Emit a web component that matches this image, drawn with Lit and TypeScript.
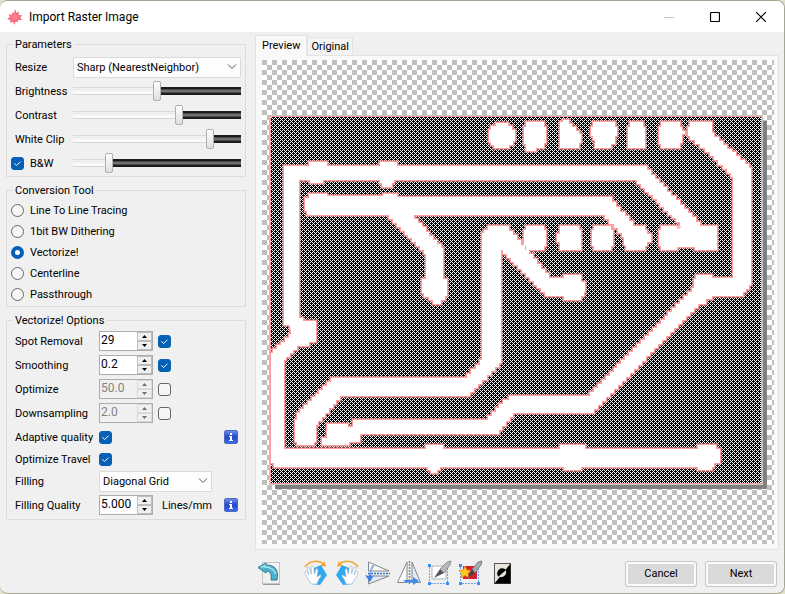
import { LitElement, html, svg, css } from "lit";
import { customElement, property, state } from "lit/decorators.js";

type Point = [number, number];

const STEP = 4;

/* Closed outline whose slanted edges are broken into pixel-like stairs. */
function stairs(points: Point[]): string {
  const out: string[] = [`M${points[0][0]} ${points[0][1]}`];
  points.forEach(([x0, y0], i) => {
    const [x1, y1] = points[(i + 1) % points.length];
    const dx = x1 - x0;
    const dy = y1 - y0;
    if (dx === 0 || dy === 0) {
      out.push(`L${x1} ${y1}`);
      return;
    }
    const n = Math.max(1, Math.round(Math.min(Math.abs(dx), Math.abs(dy)) / STEP));
    for (let k = 1; k <= n; k++) {
      out.push(`H${Math.round(x0 + (dx * (k - 0.5)) / n)}`);
      out.push(`V${Math.round(y0 + (dy * k) / n)}`);
    }
    out.push(`H${x1}`);
  });
  return out.join("") + "Z";
}

/* Pad with its four corners notched. */
function pad(l: number, t: number, r: number, b: number): Point[] {
  return [
    [l + 4, t], [r - 4, t], [r, t + 4], [r, b - 4],
    [r - 4, b], [l + 4, b], [l, b - 4], [l, t + 4],
  ];
}

const COPPER: Point[][] = [
  [
    [284, 166], [309, 166], [309, 162], [327, 162], [327, 166], [380, 166], [380, 162],
    [397, 162], [397, 166], [645, 166], [702, 226], [717, 226], [717, 250], [695, 250],
    [695, 247], [677, 247], [677, 250], [663, 250], [659, 246], [659, 230], [663, 226],
    [682, 226], [635, 180], [394, 180], [394, 183], [390, 187], [384, 187], [380, 183],
    [380, 180], [323, 180], [323, 183], [310, 183], [310, 180], [299, 180], [299, 318],
    [303, 318], [303, 321], [316, 321], [316, 342], [309, 342], [309, 346], [299, 346],
    [284, 360], [284, 449], [426, 449], [426, 445], [443, 445], [443, 449], [560, 449],
    [560, 445], [585, 445], [585, 449], [698, 449], [698, 445], [716, 445], [716, 449],
    [720, 449], [720, 463], [716, 463], [712, 467], [712, 470], [698, 470], [698, 467],
    [581, 467], [581, 470], [564, 470], [564, 467], [441, 467], [435, 473], [432, 473],
    [426, 467], [274, 467], [274, 463], [271, 463], [271, 353], [291, 334], [291, 329],
    [288, 325], [284, 325],
  ],
  [
    [305, 198], [312, 194], [327, 194], [327, 196], [383, 196], [383, 194], [397, 194],
    [397, 197], [610, 197], [635, 226], [645, 226], [645, 230], [653, 238], [645, 246],
    [645, 250], [628, 250], [624, 245], [624, 237], [603, 215], [412, 215], [443, 248],
    [443, 279], [447, 279], [447, 296], [439, 304], [435, 304], [422, 293], [422, 279],
    [426, 279], [426, 254], [387, 215], [309, 215], [305, 211],
  ],
  [
    [688, 127], [692, 122], [712, 122], [712, 133], [751, 168], [751, 285], [741, 296],
    [712, 296], [712, 299], [700, 304], [592, 413], [515, 413], [497, 434], [362, 434],
    [358, 442], [349, 442], [349, 445], [322, 445], [322, 438], [327, 438], [327, 424],
    [348, 424], [348, 427], [351, 427], [355, 420], [486, 420], [505, 400], [513, 396],
    [588, 396], [694, 288], [694, 279], [698, 275], [712, 275], [712, 278], [733, 278],
    [733, 177], [708, 152], [702, 148], [688, 136],
  ],
  [
    [482, 233], [490, 226], [507, 226], [551, 278], [564, 278], [564, 275], [581, 275],
    [581, 282], [585, 282], [585, 292], [579, 300], [564, 300], [564, 296], [547, 296],
    [501, 250], [501, 363], [468, 396], [342, 396], [316, 425], [316, 442], [312, 445],
    [298, 445], [295, 442], [295, 420], [298, 413], [333, 378], [465, 378], [482, 360],
  ],
  [
    [492, 126], [496, 126], [496, 123], [508, 123], [508, 126], [515, 130], [515, 141],
    [511, 145], [507, 148], [495, 148], [489, 142], [489, 130],
  ],
  [
    [528, 122], [542, 122], [546, 127], [546, 143], [542, 148], [536, 148], [536, 151],
    [528, 151], [524, 144], [524, 127],
  ],
  [
    [560, 122], [563, 122], [563, 120], [567, 120], [581, 134], [581, 143], [577, 148],
    [560, 148],
  ],
  [
    [595, 122], [613, 122], [617, 127], [617, 136], [613, 144], [609, 148], [595, 148],
    [595, 140], [591, 136], [591, 127],
  ],
  [[632, 122], [641, 122], [645, 127], [645, 148], [628, 148], [628, 127]],
  [
    [663, 122], [678, 122], [682, 127], [682, 131], [685, 131], [685, 134], [682, 134],
    [682, 143], [678, 148], [663, 148], [659, 144], [659, 127],
  ],
  pad(524, 226, 546, 250),
  [
    [560, 226], [577, 226], [581, 230], [581, 250], [560, 250], [560, 242], [557, 242],
    [557, 234], [560, 234],
  ],
  pad(592, 226, 613, 250),
];

const copperPath = COPPER.map(stairs).join("");

const icons = {
  app: svg`<svg viewBox="0 0 16 16" width="16" height="16">
    <path fill="#f4647a" d="M8 0 L9.500 4 L12 2.500 L11.500 6 L15.500 6.500 L13 8.500 L15 11 L11 11 L11 13 L8.500 12.500 L7.500 16 L6 12.500 L3 14 L3.500 11 L0 10 L3 8 L1.500 5 L5 6 L5.500 3 L7 4.500Z"/>
    <path fill="#fb7f8c" d="M8 3 L10 6 L13 7.500 L11 9 L10.500 11.500 L7.500 11 L4 11 L4.500 8.500 L4 6.500 L7 6Z"/>
  </svg>`,
  undo: svg`<svg viewBox="0 0 26 26" width="26" height="26">
    <rect x="5.500" y="2.500" width="17" height="21" fill="#f2f2f2" stroke="#c4c4c4"/>
    <path d="M6 24.500h17" stroke="#999"/>
    <path d="M1 7.500 L9 3 V5 C18 5 22 10 20 20 H14 C15 14 13 11 9 11 V13Z" fill="#4fb2cc" stroke="#287a94"/>
    <path d="M4 7.500 L8 5.500 V7 C14 7 18 10 18.500 14" fill="none" stroke="#a7e2f0" stroke-width="1.500"/>
  </svg>`,
  hand: svg`<svg viewBox="0 0 26 26" width="26" height="26">
    <path d="M11 8 L18 5 L24 15 L17 25 L9 24Z" fill="#2ea8ef"/>
    <path d="M2 7 C7 0 16 0 21 4" fill="none" stroke="#f5a12c" stroke-width="1.500"/>
    <path d="M23 7 L17.500 5.500 L21.500 1.500Z" fill="#f5a12c"/>
    <path d="M8 24 C6 19 2 16 2 12 C3 10 5 13 6 15 L4 8 C5 6 7 8 7 10 L8.500 14 L8 7 C9 5 11 7 11 9 L11.500 14 L13 9 C14 8 15 9 15 11 L14 17 L17 15 C19 15 18 17 16 19 L14 24Z" fill="#fff" stroke="#91b6ce" stroke-width=".7"/>
  </svg>`,
  flipV: svg`<svg viewBox="0 0 26 26" width="26" height="26">
    <path d="M3.500 2 V11 H24Z" fill="#fafafa" stroke="#888"/>
    <path d="M3.500 24 V16 H24Z" fill="#dceafa" stroke="#888"/>
    <path d="M3 13.500h22" stroke="#2a72c8" stroke-width="1.500" stroke-dasharray="2 1"/>
    <path d="M9 5 C6 8 5 13 5 17" fill="none" stroke="#8ab3e6" stroke-width="2"/>
    <path d="M0 15 L5 22 L9 15 L6 16.500 L5 13 L3.500 16Z" fill="#3b7de0"/>
  </svg>`,
  flipH: svg`<svg viewBox="0 0 26 26" width="26" height="26">
    <path d="M11 2 V22.500 H1.500Z" fill="#fafafa" stroke="#888"/>
    <path d="M16 2 V22.500 H24.500Z" fill="#dceafa" stroke="#888"/>
    <path d="M13.500 1v24" stroke="#888" stroke-width="1.500" stroke-dasharray="2 1"/>
    <path d="M7 20 H17 V17 L23 21 L17 25 V22.500 H10Z" fill="#3b8be8"/>
  </svg>`,
  crop: svg`<svg viewBox="0 0 26 26" width="26" height="26">
    <path d="M5 6h14v13H5z" fill="#fff" stroke="#a8b4c4"/>
    <path d="M2.500 4v19.500h18V8" fill="none" stroke="#6ba4ec" stroke-dasharray="2 1"/>
    <path d="M1 4h3v3H1zM1 22h3v3H1zM19 22h3v3h-3z" fill="#3b8bf0"/>
    <path d="M7 18 L13 9 L17 13Z" fill="#555"/>
    <path d="M13 9 L20 2 L24 1 L23 5 L17 13Z" fill="#b8b8b8" stroke="#777" stroke-width=".7"/>
  </svg>`,
  autoTrim: svg`<svg viewBox="0 0 26 26" width="26" height="26">
    <path d="M5 6h14v13H5z" fill="#d21f2c"/>
    <path d="M2.500 4v19.500h18V8" fill="none" stroke="#6ba4ec" stroke-dasharray="2 1"/>
    <path d="M1 4h3v3H1zM1 22h3v3H1zM19 22h3v3h-3z" fill="#3b8bf0"/>
    <path d="M7 6 L8.700 10 L13 10.500 L10 13.500 L11 18 L7 15.500 L3 18 L3.800 13.500 L1 10.500 L5.300 10Z" fill="#ffc928" stroke="#e88a10" stroke-width=".8"/>
    <path d="M9 18 L14 9 L17 13Z" fill="#444"/>
    <path d="M14 9 L20 2 L24 1 L23 5 L17 13Z" fill="#aaa" stroke="#666" stroke-width=".7"/>
  </svg>`,
  invert: svg`<svg viewBox="0 0 26 26" width="26" height="26">
    <rect x="5.500" y="3.500" width="16" height="20" fill="#e9e5dc" stroke="#555"/>
    <path d="M21.500 3.500 V23.500 H5.500Z" fill="#000"/>
    <path d="M9.500 16.800 A5 5 0 1 1 17 10Z" fill="#000"/>
    <path d="M10 16.500 L16.800 10.200 A5 5 0 0 1 10 16.500Z" fill="#e9e5dc"/>
  </svg>`,
};

@customElement("spin-box")
export class SpinBox extends LitElement {
  @property() value = "";
  @property() name = "";
  @property({ type: Boolean }) disabled = false;

  static styles = css`
    :host { display: inline-flex; }
    .box {
      display: flex;
      box-sizing: border-box;
      width: 54px;
      height: 20px;
      border: 1px solid #abadb3;
      background: #fff;
    }
    .box.off { background: #f0f0f0; }
    .field {
      flex: 1;
      min-width: 0;
      border: 0;
      padding: 0 0 2px 1px;
      background: transparent;
      font: 12px Roboto, sans-serif;
      color: #000;
      outline: 0;
    }
    .off .field { color: #838383; }
    .arrows { display: flex; flex-direction: column; width: 15px; }
    .arrow {
      flex: 1;
      display: flex;
      align-items: center;
      justify-content: center;
      padding: 0;
      border: 1px solid #bdbdbd;
      background: #f0f0f0;
    }
    .arrow svg { display: block; fill: #000; }
    .off .arrow { border-color: #d9d9d9; }
    .off .arrow svg { fill: #707070; }
  `;

  render() {
    return html`<div class="box ${this.disabled ? "off" : ""}">
      <input class="field" aria-label=${this.name} .value=${this.value} ?disabled=${this.disabled} />
      <div class="arrows">
        <button class="arrow" aria-label="Increase" ?disabled=${this.disabled}>
          <svg width="5" height="3" viewBox="0 0 5 3"><path d="M0 3L2.500 0L5 3Z" /></svg>
        </button>
        <button class="arrow" aria-label="Decrease" ?disabled=${this.disabled}>
          <svg width="5" height="3" viewBox="0 0 5 3"><path d="M0 0L2.500 3L5 0Z" /></svg>
        </button>
      </div>
    </div>`;
  }
}

@customElement("app-root")
export class AppRoot extends LitElement {
  @state() private levels = { brightness: 50, contrast: 64, clip: 83, bw: 20 };

  static styles = css`
    :host {
      display: block;
      background: #e2e0c6;
      font: 11px/15px Roboto, sans-serif;
      color: #000;
    }
    .window {
      display: flex;
      flex-direction: column;
      box-sizing: border-box;
      min-height: 100vh;
      border: solid #a5a696;
      border-width: 1px 1px 1px 0;
      border-radius: 8px;
      background: #f0f0f0;
      overflow: hidden;
    }
    .titlebar {
      display: flex;
      align-items: center;
      height: 31px;
      padding-left: 7px;
      background: #fff;
    }
    .title {
      flex: 1;
      margin: 0;
      padding-left: 6px;
      font: 12px/16px Roboto, sans-serif;
    }
    .caption {
      display: flex;
      align-items: center;
      justify-content: center;
      width: 46px;
      height: 31px;
      padding: 0;
      border: 0;
      background: none;
    }
    .body { flex: 1; display: flex; }
    .settings {
      width: 240px;
      flex: none;
      display: flex;
      flex-direction: column;
      gap: 6px;
      padding: 5px 9px 0 6px;
    }
    .group {
      box-sizing: border-box;
      min-width: 0;
      margin: 0;
      padding: 2px 4px 1px;
      border: 1px solid #dcdcdc;
    }
    .legend { margin-left: 2px; padding: 0 2px; height: 15px; }
    .params { padding-top: 3px; }
    .options { padding: 1px 4px 2px; }
    .row { display: flex; align-items: center; height: 24px; }
    .row.low { height: 20px; }
    .label { width: 58px; padding-left: 4px; }
    .label.wide { width: 84px; }
    .label.check { padding-left: 0; width: 62px; }
    .check, .option { display: flex; align-items: center; gap: 6px; }
    .option { height: 21px; }
    .unit { margin-left: 9px; }
    .push { flex: 1; }

    .tick, .radio {
      appearance: none;
      flex: none;
      box-sizing: border-box;
      width: 13px;
      height: 13px;
      margin: 0;
      border: 1px solid #666;
      border-radius: 3px;
      background: #f6f6f6;
    }
    .tick.gap { margin-left: 5px; }
    .tick:checked {
      border-color: #0560b6;
      background: #0560b6
        url('data:image/svg+xml,<svg xmlns="http://www.w3.org/2000/svg" viewBox="0 0 11 11"><path d="M2.500 5.500L4.700 7.500L8.500 3.700" fill="none" stroke="white"/></svg>');
    }
    .radio { border-radius: 50%; }
    .radio:checked { border: 4px solid #0560b6; background: #fff; }

    .select {
      appearance: none;
      box-sizing: border-box;
      height: 21px;
      padding: 0 20px 0 3px;
      border: 1px solid #dadada;
      border-radius: 1px;
      background: #fdfdfd
        url('data:image/svg+xml,<svg xmlns="http://www.w3.org/2000/svg" width="10" height="6"><path d="M1 .5L5 4.500L9 .5" fill="none" stroke="%23555"/></svg>')
        no-repeat right 3px center;
      font: inherit;
      color: #000;
    }
    .fill { flex: 1; min-width: 0; }
    .medium { width: 113px; }

    .slider {
      appearance: none;
      flex: 1;
      min-width: 0;
      height: 20px;
      margin: 0;
      background:
        linear-gradient(#d8d8d8 0 1px, #f0f0f0 1px 4px, #fafafa 4px 7px, #d8d8d8 7px)
          0 50% / var(--level) 8px no-repeat,
        linear-gradient(#1c1c1c 0 2px, #4a4a4a 2px 3px, #707070 3px 5px, #4a4a4a 5px 6px, #1c1c1c 6px)
          0 50% / 100% 8px no-repeat;
    }
    .slider::-webkit-slider-thumb {
      appearance: none;
      box-sizing: border-box;
      width: 8px;
      height: 20px;
      border: 1px solid #b0b0b0;
      border-radius: 2px;
      background: linear-gradient(#fff, #eee 50%, #ddd);
    }

    .info {
      display: flex;
      align-items: center;
      justify-content: center;
      width: 14px;
      height: 14px;
      margin-right: 3px;
      padding: 0;
      border: 1px solid #5068b8;
      border-radius: 2px;
      background: linear-gradient(#6a8df0, #2148c8 50%, #3c6cec);
    }

    .main { flex: 1; min-width: 0; display: flex; flex-direction: column; padding: 3px 5px 0 0; }
    .tabs { display: flex; align-items: flex-end; }
    .tab {
      height: 18px;
      padding: 0 3px;
      border: 1px solid #e3e3e3;
      border-bottom: 0;
      background: #f3f3f3;
      font: inherit;
      line-height: 17px;
      color: #000;
    }
    .tab.active {
      position: relative;
      height: 21px;
      margin-bottom: -1px;
      padding: 0 6px 2px;
      background: #f9f9f9;
    }
    .panel {
      flex: 1;
      display: flex;
      padding: 4px 4px 5px 6px;
      border: 1px solid #e3e3e3;
      background: #f9f9f9;
    }
    .canvas {
      flex: 1;
      display: flex;
      padding: 0 7px;
      background: repeating-conic-gradient(#fff 0 25%, #bfbfbf 0 50%) 0 0 / 10px 10px;
    }
    .board { display: block; width: 100%; height: auto; }

    .footer {
      display: flex;
      align-items: center;
      box-sizing: border-box;
      height: 43px;
      padding: 4px 2px 0;
    }
    .tools { display: flex; align-items: center; gap: 5px; flex: 1; padding-bottom: 2px; }
    .tool { display: flex; width: 26px; height: 26px; padding: 0; border: 0; background: none; }
    .tool.first { margin-right: 15px; }
    .mirror { transform: scaleX(-1); }
    .push-button {
      box-sizing: border-box;
      width: 72px;
      height: 26px;
      margin-left: 8px;
      border: 1px solid #c6c6c6;
      border-radius: 3px;
      background: #dadada;
      box-shadow: inset 0 0 0 2px #fbfbfb;
      font: inherit;
      color: #000;
    }
  `;

  private slider(key: keyof AppRoot["levels"], name: string) {
    const level = this.levels[key];
    return html`<input
      class="slider" type="range" min="0" max="100" aria-label=${name} .value=${String(level)}
      style="--level:${level}%"
      @input=${(e: Event) => {
        this.levels = { ...this.levels, [key]: Number((e.target as HTMLInputElement).value) };
      }}
    />`;
  }

  private spinRow(name: string, value: string, on: boolean) {
    return html`<div class="row">
      <span class="label wide">${name}</span>
      <spin-box name=${name} value=${value} ?disabled=${!on}></spin-box>
      <input class="tick gap" type="checkbox" aria-label=${"Enable " + name} .checked=${on} />
    </div>`;
  }

  private info(name: string) {
    return html`<button class="info" aria-label=${name}>
      <svg width="4" height="8" viewBox="0 0 4 8"><path fill="#fff" d="M1 0h2v2H1zM0 3h3v4h1v1H0V7h1V4H0z" /></svg>
    </button>`;
  }

  private tool(name: string, icon: unknown, cls = "") {
    return html`<button class="tool ${cls}" aria-label=${name}>${icon}</button>`;
  }

  render() {
    return html`<div class="window">
      <header class="titlebar">
        ${icons.app}
        <h1 class="title">Import Raster Image</h1>
        <button class="caption" aria-label="Minimize">
          <svg width="10" height="10"><path d="M0 5.500h10" stroke="#c4c4c4" /></svg>
        </button>
        <button class="caption" aria-label="Maximize">
          <svg width="10" height="10"><rect x=".5" y=".5" width="9" height="9" rx="1" fill="none" stroke="#000" stroke-width="1.200" /></svg>
        </button>
        <button class="caption" aria-label="Close">
          <svg width="10" height="10"><path d="M0 0L10 10M10 0L0 10" stroke="#000" stroke-width="1.200" /></svg>
        </button>
      </header>
      <div class="body">
        <aside class="settings">
          <fieldset class="group params">
            <legend class="legend">Parameters</legend>
            <div class="row">
              <label class="label" for="resize">Resize</label>
              <select class="select fill" id="resize"><option>Sharp (NearestNeighbor)</option></select>
            </div>
            <div class="row"><span class="label">Brightness</span>${this.slider("brightness", "Brightness")}</div>
            <div class="row"><span class="label">Contrast</span>${this.slider("contrast", "Contrast")}</div>
            <div class="row"><span class="label">White Clip</span>${this.slider("clip", "White Clip")}</div>
            <div class="row">
              <label class="label check"><input class="tick" type="checkbox" checked />B&amp;W</label>
              ${this.slider("bw", "B&W threshold")}
            </div>
          </fieldset>
          <fieldset class="group">
            <legend class="legend">Conversion Tool</legend>
            ${["Line To Line Tracing", "1bit BW Dithering", "Vectorize!", "Centerline", "Passthrough"].map(
              (t) => html`<label class="option">
                <input class="radio" type="radio" name="tool" .checked=${t === "Vectorize!"} />${t}
              </label>`
            )}
          </fieldset>
          <fieldset class="group options">
            <legend class="legend">Vectorize! Options</legend>
            ${this.spinRow("Spot Removal", "29", true)}
            ${this.spinRow("Smoothing", "0.2", true)}
            ${this.spinRow("Optimize", "50.0", false)}
            ${this.spinRow("Downsampling", "2.0", false)}
            <div class="row">
              <label class="label wide" for="adaptive">Adaptive quality</label>
              <input class="tick" id="adaptive" type="checkbox" checked />
              <span class="push"></span>${this.info("About adaptive quality")}
            </div>
            <div class="row low">
              <label class="label wide" for="travel">Optimize Travel</label>
              <input class="tick" id="travel" type="checkbox" checked />
            </div>
            <div class="row">
              <label class="label wide" for="filling">Filling</label>
              <select class="select medium" id="filling"><option>Diagonal Grid</option></select>
            </div>
            <div class="row">
              <span class="label wide">Filling Quality</span>
              <spin-box name="Filling Quality" value="5.000"></spin-box>
              <span class="unit">Lines/mm</span>
              <span class="push"></span>${this.info("About filling quality")}
            </div>
          </fieldset>
        </aside>
        <main class="main">
          <div class="tabs" role="tablist">
            <button class="tab active" role="tab" aria-selected="true">Preview</button>
            <button class="tab" role="tab" aria-selected="false">Original</button>
          </div>
          <div class="panel">
            <div class="canvas">
              <svg class="board" viewBox="269 115 498 374" role="img" aria-label="Circuit board preview">
                <defs>
                  <pattern id="grid" x="271" y="117" width="4" height="4" patternUnits="userSpaceOnUse" shape-rendering="crispEdges">
                    <rect width="4" height="4" fill="#000" />
                    <path fill="#fff" d="M0 0h1v1H0zM1 1h1v1H1zM2 2h1v1H2zM3 3h1v1H3zM3 1h1v1H3zM1 3h1v1H1z" />
                  </pattern>
                </defs>
                <rect x="275" y="121" width="492" height="368" fill="#808080" />
                <rect x="269" y="115" width="494" height="370" fill="#c8c8c8" />
                <rect x="270" y="116" width="492" height="368" fill="#ff9c9c" />
                <rect x="271" y="117" width="490" height="366" fill="url(#grid)" />
                <path d=${copperPath} fill="none" stroke="#ff9c9c" stroke-width="3" />
                <path d=${copperPath} fill="#fff" />
                <path d="M677 226h3v2h-3z" fill="#fff" stroke="#ff9c9c" />
              </svg>
            </div>
          </div>
          <footer class="footer">
            <div class="tools">
              ${this.tool("Revert", icons.undo, "first")}
              ${this.tool("Rotate right", icons.hand)}
              ${this.tool("Rotate left", icons.hand, "mirror")}
              ${this.tool("Flip vertical", icons.flipV)}
              ${this.tool("Flip horizontal", icons.flipH)}
              ${this.tool("Crop", icons.crop)}
              ${this.tool("Auto trim", icons.autoTrim)}
              ${this.tool("Invert", icons.invert)}
            </div>
            <button class="push-button">Cancel</button>
            <button class="push-button">Next</button>
          </footer>
        </main>
      </div>
    </div>`;
  }
}
